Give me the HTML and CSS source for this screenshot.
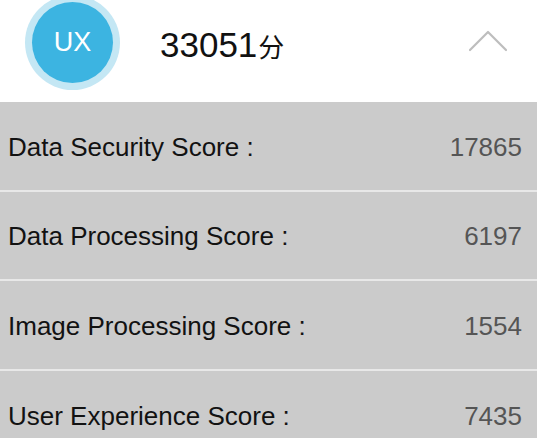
FILE: index.html
```html
<!DOCTYPE html>
<html>
<head>
<meta charset="utf-8">
<link rel="stylesheet" href="styles.css">
</head>
<body>
<div class="header">
  <div class="badge"><div class="badge-inner">UX</div></div>
  <div class="total">33051<span class="unit">分</span></div>
  <svg class="chevron" width="40" height="24" viewBox="0 0 40 24"><polyline points="2,21 20,3 38,21" fill="none" stroke="#bdbdbd" stroke-width="2.2" stroke-linecap="round" stroke-linejoin="round"/></svg>
</div>
<div class="list">
  <div class="row"><span class="label">Data Security Score :</span><span class="value">17865</span></div>
  <div class="row"><span class="label">Data Processing Score :</span><span class="value">6197</span></div>
  <div class="row"><span class="label">Image Processing Score :</span><span class="value">1554</span></div>
  <div class="row"><span class="label">User Experience Score :</span><span class="value">7435</span></div>
</div>
</body>
</html>
```
FILE: styles.css
```css
html, body {
  margin: 0;
  padding: 0;
  background: #ffffff;
  font-family: "Liberation Sans", Arial, "Noto Sans CJK SC", sans-serif;
  overflow: hidden;
  height: 438px;
}
.header {
  height: 102px;
  display: flex;
  align-items: flex-start;
  background: #fff;
}
.badge {
  width: 95px;
  height: 95px;
  margin-top: -5px;
  margin-left: 25px;
  border-radius: 50%;
  background: #c4e7f4;
  display: flex;
  align-items: center;
  justify-content: center;
  flex: none;
}
.badge-inner {
  width: 81px;
  height: 81px;
  border-radius: 50%;
  background: #3cb4e1;
  color: #fff;
  font-size: 27px;
  display: flex;
  align-items: center;
  justify-content: center;
}
.total {
  margin-left: 40px;
  margin-top: 25px;
  font-size: 35px;
  line-height: 40px;
  color: #111;
  flex: 1;
}
.unit {
  font-family: "Noto Sans CJK SC", sans-serif;
  font-size: 26px;
  margin-left: 1px;
}
.chevron {
  margin-top: 29px;
  margin-right: 29px;
  flex: none;
}
.list {
  background: #cbcbcb;
  height: 336px;
  overflow: hidden;
}
.row {
  height: 89.5px;
  display: flex;
  align-items: center;
  justify-content: space-between;
  padding: 3px 15px 0 8px;
  box-sizing: border-box;
  border-bottom: 2px solid #e8e8e8;
  font-size: 26px;
}
.row:last-child {
  border-bottom: none;
}
.label {
  color: #121212;
}
.value {
  color: #555555;
}
```
